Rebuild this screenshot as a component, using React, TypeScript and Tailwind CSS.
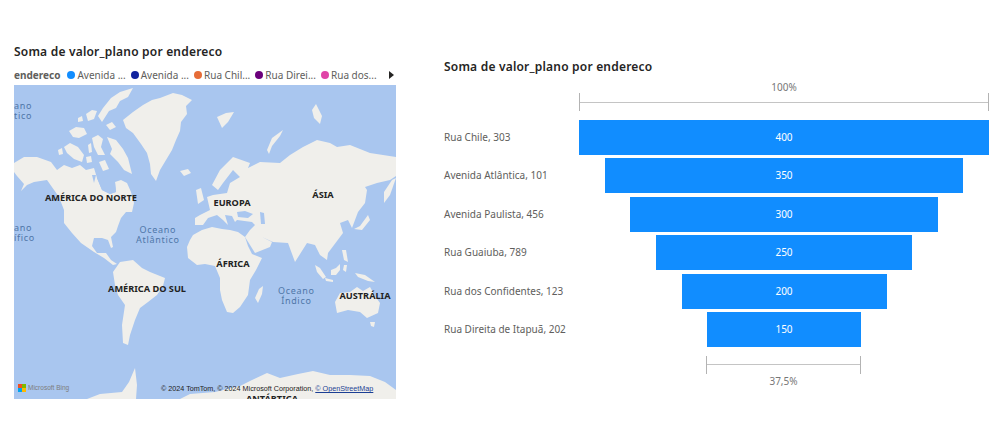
const legend = [
  { name: 'Avenida ...', color: 'bg-[#118dff]' },
  { name: 'Avenida ...', color: 'bg-[#12239e]' },
  { name: 'Rua Chil...', color: 'bg-[#e66c37]' },
  { name: 'Rua Direi...', color: 'bg-[#6b007b]' },
  { name: 'Rua dos...', color: 'bg-[#e044a7]' },
];

const funnel = [
  { name: 'Rua Chile, 303', value: 400 },
  { name: 'Avenida Atlântica, 101', value: 350 },
  { name: 'Avenida Paulista, 456', value: 300 },
  { name: 'Rua Guaiuba, 789', value: 250 },
  { name: 'Rua dos Confidentes, 123', value: 200 },
  { name: 'Rua Direita de Itapuã, 202', value: 150 },
];

const land = [
  // Alaska, Canada, USA, Mexico, Central America
  'M14 163 L24 157 L37 157 L51 162 L57 170 L64 165 L72 168 L80 165 L86 170 L94 168 L97 178 L102 190 L110 194 L116 192 L115 182 L121 180 L127 183 L131 192 L134 203 L132 212 L126 212 L121 218 L118 226 L116 232 L111 237 L113 247 L111 248 L108 240 L102 238 L94 238 L92 246 L97 253 L106 253 L111 260 L117 264 L113 265 L104 258 L94 252 L81 243 L72 233 L64 223 L64 210 L59 197 L47 180 L34 182 L27 185 L21 191 L24 184 L17 176 L14 172 Z',
  // Greenland
  'M123 120 L133 112 L143 105 L152 100 L160 98 L173 93 L182 95 L192 100 L186 106 L187 114 L181 122 L180 131 L176 140 L172 150 L166 160 L160 170 L156 181 L151 174 L150 164 L147 153 L141 144 L133 133 L126 128 Z',
  // Arctic islands
  'M98 116 L103 108 L111 98 L120 92 L133 88 L128 97 L120 101 L116 108 L109 111 L102 122 Z',
  'M107 137 L116 140 L123 149 L128 158 L132 174 L124 170 L118 162 L110 154 L112 149 Z',
  'M64 147 L70 143 L78 147 L84 155 L82 162 L74 159 L67 153 Z',
  'M69 131 L76 127 L84 128 L87 134 L79 138 L73 137 Z',
  'M92 138 L98 135 L103 139 L101 147 L105 155 L98 155 L94 147 Z',
  'M86 114 L92 110 L97 111 L94 119 L88 121 Z',
  'M78 118 L82 116 L83 121 L78 122 Z',
  'M99 162 L105 160 L109 169 L103 171 Z',
  'M88 145 L91 143 L92 152 L89 153 Z',
  'M86 157 L91 156 L92 162 L87 163 Z',
  'M106 125 L112 122 L116 127 L110 130 Z',
  'M58 150 L62 148 L63 154 L59 155 Z',
  // South America
  'M113 272 L120 262 L133 260 L142 268 L150 272 L165 278 L163 286 L157 295 L148 302 L140 308 L135 320 L130 335 L128 345 L123 343 L122 325 L125 305 L118 295 L115 285 Z',
  // Africa
  'M187 247 L190 240 L193 235 L202 230 L212 227 L222 229 L230 230 L238 232 L245 237 L248 246 L252 254 L262 258 L256 270 L250 280 L248 295 L240 307 L233 313 L227 312 L222 300 L220 290 L220 278 L215 266 L205 264 L197 265 L188 258 Z',
  'M255 298 L259 289 L263 286 L262 294 L258 303 Z',
  // Eurasia
  'M195 218 L200 215 L210 210 L207 197 L213 195 L227 193 L230 183 L240 177 L233 170 L223 183 L218 190 L212 185 L220 170 L233 157 L250 163 L248 168 L260 162 L280 163 L290 155 L303 147 L317 140 L330 143 L337 147 L350 145 L370 153 L396 157 L396 176 L390 180 L377 183 L365 187 L367 190 L365 203 L358 212 L352 228 L348 220 L340 223 L343 233 L328 253 L327 260 L320 255 L315 245 L307 243 L295 262 L288 243 L273 242 L262 237 L272 242 L270 247 L255 253 L245 237 L250 230 L255 225 L252 222 L237 220 L235 222 L232 216 L225 215 L228 225 L223 220 L217 215 L208 218 L203 225 L195 225 Z',
  // Kamchatka, Japan
  'M392 180 L396 178 L390 195 L384 203 L384 192 Z',
  'M368 215 L370 220 L362 230 L354 229 L360 226 Z',
  // UK, Iceland, Svalbard, Novaya Zemlya etc
  'M196 190 L201 188 L204 200 L198 204 Z',
  'M180 171 L188 169 L191 173 L184 176 Z',
  'M217 117 L226 113 L234 112 L228 122 L222 128 Z',
  'M267 150 L272 138 L283 130 L280 136 L272 146 L269 154 Z',
  'M312 110 L316 104 L322 116 L320 124 L314 118 Z',
  // Indonesia, Philippines, New Guinea
  'M315 265 L320 268 L326 277 L323 279 L317 272 Z',
  'M331 270 L336 268 L340 264 L340 270 L336 275 L331 275 Z',
  'M325 278 L333 280 L333 282 L326 281 Z',
  'M355 273 L365 275 L375 282 L368 281 L358 277 Z',
  'M342 250 L346 250 L348 262 L344 260 Z',
  'M344 265 L347 265 L346 272 L343 270 Z',
  // Australia
  'M335 302 L340 293 L350 292 L357 287 L363 291 L370 287 L375 296 L380 303 L378 313 L367 318 L360 312 L348 310 L337 313 Z',
  'M370 322 L375 322 L374 327 L371 326 Z',
  // Antarctica
  'M240 386 L252 380 L267 373 L280 378 L298 374 L313 371 L330 375 L350 375 L370 376 L385 382 L396 390 L396 399 L180 399 L190 394 L215 392 Z',
  'M87 399 L100 394 L122 392 L129 382 L135 368 L137 385 L136 399 Z',
];

// inland seas cut back out of the land
const water = [
  'M97 178 L102 190 L110 194 L116 192 L115 182 L108 176 Z',
  'M237 212 L245 211 L253 214 L248 218 L238 217 Z',
  'M260 212 L264 213 L265 224 L261 224 Z',
  'M92 175 L96 175 L94 183 Z',
];

function MapLabel({ text, className }: { text: string; className: string }) {
  return (
    <span
      className={`absolute -translate-x-1/2 -translate-y-1/2 whitespace-nowrap text-[9.2px] leading-none font-bold text-[#222] ${className}`}>
      {text}
    </span>
  );
}

function OceanLabel({ first, second, className }: { first: string; second: string; className: string }) {
  return (
    <span
      className={`absolute whitespace-nowrap text-[9px] leading-[10px] tracking-[0.7px] text-[#4f76a8] ${className}`}>
      {first}
      <br />
      {second}
    </span>
  );
}

function MapPanel() {
  return (
    <div className="relative h-[314px] w-[382px] overflow-hidden bg-[#a9c6ef]">
      <svg viewBox="14 85 382 314" className="block h-full w-full blur-[0.5px]">
        {land.map(d => (
          <path key={d} d={d} fill="#f0efeb" />
        ))}
        {water.map(d => (
          <path key={d} d={d} fill="#a9c6ef" />
        ))}
      </svg>
      <OceanLabel first="ano" second="tico" className="top-[16px] left-[0px]" />
      <OceanLabel first="ano" second="ífico" className="top-[138px] left-[0px]" />
      <OceanLabel first="Oceano" second="Atlântico" className="top-[140px] left-[122px] text-center" />
      <OceanLabel first="Oceano" second="Índico" className="top-[201px] left-[264px] text-center" />
      <MapLabel text="AMÉRICA DO NORTE" className="top-[113px] left-[77px]" />
      <MapLabel text="EUROPA" className="top-[118px] left-[218px]" />
      <MapLabel text="ÁSIA" className="top-[110px] left-[309px]" />
      <MapLabel text="ÁFRICA" className="top-[179px] left-[219px]" />
      <MapLabel text="AMÉRICA DO SUL" className="top-[204px] left-[133px]" />
      <MapLabel text="AUSTRÁLIA" className="top-[211px] left-[351px]" />
      <MapLabel text="ANTÁRTICA" className="top-[314px] left-[258px]" />
      <div className="absolute bottom-[7px] left-[4px] flex items-center gap-[2px]">
        <div className="grid h-[8px] w-[8px] grid-cols-2">
          <span className="bg-[#f25022]" />
          <span className="bg-[#7fba00]" />
          <span className="bg-[#00a4ef]" />
          <span className="bg-[#ffb900]" />
        </div>
        <span className="font-['Liberation_Sans',sans-serif] text-[6.5px] leading-none text-[#7d7d7d]">
          Microsoft Bing
        </span>
      </div>
      <div className="absolute bottom-[5px] left-[147px] whitespace-nowrap font-['Liberation_Sans',sans-serif] text-[7.2px] leading-[10px] text-[#222]">
        © 2024 TomTom, © 2024 Microsoft Corporation,{' '}
        <span className="text-[#1c3f94] underline">© OpenStreetMap</span>
      </div>
    </div>
  );
}

function Bracket({ widthClass }: { widthClass: string }) {
  return (
    <div className={`flex h-[18px] items-center border-x border-[#b3b3b3] ${widthClass}`}>
      <div className="h-px w-full bg-[#c4c4c4]" />
    </div>
  );
}

export default function App() {
  return (
    <div className="flex h-[443px] w-[1007px] overflow-hidden bg-white font-['Noto_Sans',sans-serif]">
      <div className="ml-[14px] flex w-[382px] flex-col pt-[43px]">
        <h2 className="h-[18px] text-[12px] leading-[18px] font-semibold tracking-[0.2px] text-[#252423]">
          Soma de valor_plano por endereco
        </h2>
        <div className="mt-[4px] flex h-[20px] items-center text-[10px] text-[#605e5c]">
          <span className="mr-[7px] font-bold">endereco</span>
          <div className="flex flex-1 items-center gap-[5px]">
            {legend.map((item, i) => (
              <div key={i} className="flex items-center gap-[2px]">
                <span className={`h-[8px] w-[8px] rounded-full ${item.color}`} />
                <span className="whitespace-nowrap">{item.name}</span>
              </div>
            ))}
          </div>
          <svg viewBox="0 0 5 8" className="mr-[2px] h-[8px] w-[5px]">
            <path d="M0 0 L5 4 L0 8 Z" fill="#252423" />
          </svg>
        </div>
        <MapPanel />
      </div>

      <div className="ml-[48px] flex w-[546px] flex-col pt-[58px]">
        <h2 className="h-[18px] text-[12px] leading-[18px] font-semibold tracking-[0.2px] text-[#252423]">
          Soma de valor_plano por endereco
        </h2>
        <div className="ml-[135px] w-[410px]">
          <div className="mt-[5px] text-center text-[10px] leading-[12px] text-[#777]">100%</div>
          <Bracket widthClass="w-[410px]" />
        </div>
        <div className="mt-[9px] flex flex-col gap-[3.4px]">
          {funnel.map(row => (
            <div key={row.name} className="flex h-[35px] items-center">
              <div className="w-[135px] text-[10px] whitespace-nowrap text-[#605e5c]">{row.name}</div>
              <div className="flex w-[410px] justify-center">
                <div
                  className="flex h-[35px] items-center justify-center bg-[#118dff] text-[10px] text-white"
                  style={{ width: `${(row.value / 400) * 410}px` }}>
                  {row.value}
                </div>
              </div>
            </div>
          ))}
        </div>
        <div className="ml-[135px] flex w-[410px] flex-col items-center pr-px">
          <div className="mt-[9px]">
            <Bracket widthClass="w-[155px]" />
          </div>
          <div className="mt-px text-[10px] leading-[12px] text-[#777]">37,5%</div>
        </div>
      </div>
    </div>
  );
}
